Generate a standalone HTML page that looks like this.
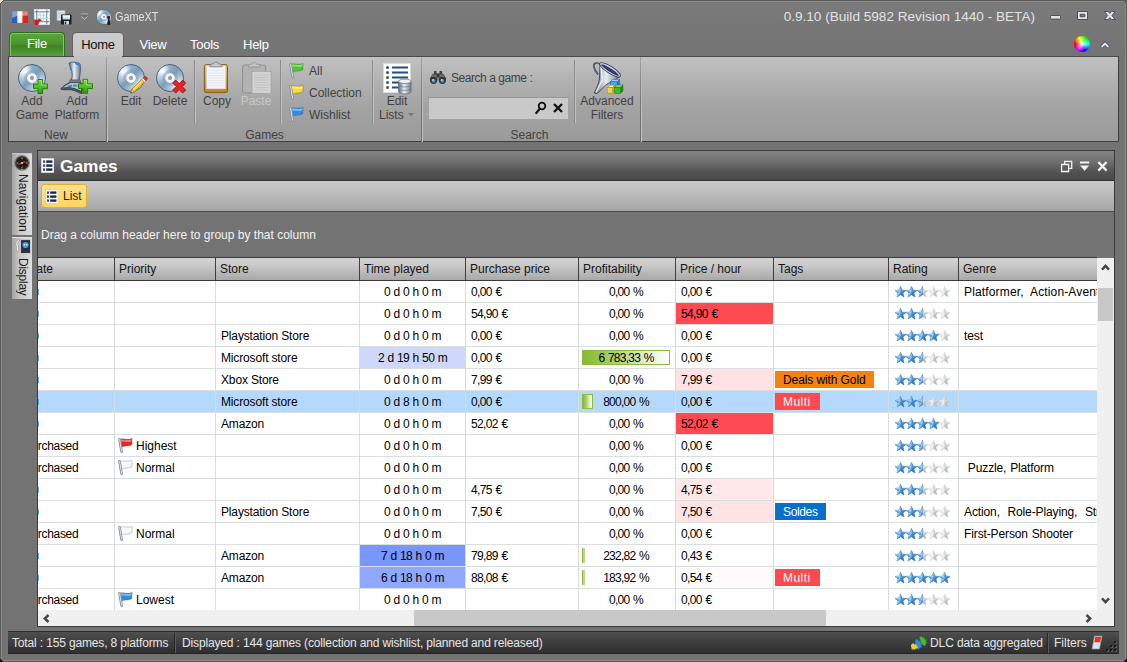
<!DOCTYPE html>
<html lang="en"><head><meta charset="utf-8"><title>GameXT</title>
<style>

*{box-sizing:border-box;margin:0;padding:0}
html,body{width:1127px;height:662px;overflow:hidden;background:#737373}
body{font-family:"Liberation Sans",sans-serif;font-size:12px;color:#000}
.abs{position:absolute}
#win{position:absolute;left:0;top:0;width:1127px;height:662px;background:#737373;overflow:hidden}
.ct{height:21px;line-height:23px;white-space:pre;font-size:12px;color:#000}
.num{letter-spacing:-.55px;word-spacing:.6px}
.num2{letter-spacing:-.65px;word-spacing:1px}
.gen{letter-spacing:-.12px;word-spacing:.6px}
.tag{height:17px;line-height:18px;padding-left:8px;letter-spacing:-.1px}
.hl{left:0;width:1060px;height:1px;background:#dcdfe2}
.vl{top:0;width:1px;height:329px;background:#d9dcdf}
.hd{height:22px;line-height:22px;font-size:12px;color:#141414;white-space:pre}
.hdrbg{background:linear-gradient(#d1d1d1 0%,#cbcbcb 30%,#b7b7b7 70%,#a9a9a9 100%)}
.bar{border:1px solid #8cbd3a;background:linear-gradient(90deg,#86b92f 0%,#a9cf68 35%,#e4f1cf 75%,#ffffff 100%);box-sizing:content-box}
.rt{color:#424242;font-size:12px;white-space:pre;text-align:center;line-height:14px}
.tab{top:33px;height:24px;line-height:24px;font-size:13px;color:#fff;white-space:pre;letter-spacing:-.25px}
.gsep{top:57px;width:2px;height:85px;background:linear-gradient(rgba(255,255,255,0),rgba(255,255,255,0)),linear-gradient(90deg,#6e6e6e 0 1px,#c2c2c2 1px 2px);-webkit-mask-image:linear-gradient(rgba(0,0,0,.35),#000 70%);mask-image:linear-gradient(rgba(0,0,0,.35),#000 70%)}
.isep{top:60px;width:2px;height:63px;background:linear-gradient(90deg,#8c8c8c 0 1px,#c0c0c0 1px 2px)}
.glabel{top:128px;height:15px;line-height:15px;color:#424242;font-size:12px;text-align:center;white-space:pre}
.disc{width:28px;height:28px;border-radius:50%;border:1px solid #48657e;background:radial-gradient(circle at 50% 50%,#9a9a9a 0,#a2a2a2 1.6px,#f4f5f7 2.5px,#f4f5f7 4.4px,#a3b6c8 5px,rgba(128,160,190,.6) 5.6px,rgba(128,160,190,.5) 7.4px,rgba(255,255,255,0) 8.4px),conic-gradient(from 0deg,#8eadc8 0deg,#7b9cb9 45deg,#bdd2e3 95deg,#f2f7fb 125deg,#fbfdfe 138deg,#c3d6e6 165deg,#7b9cb9 225deg,#bdd2e3 275deg,#f6fafd 305deg,#ffffff 318deg,#c9dbea 340deg,#8eadc8 360deg)}
.st{color:#e6e6e6;font-size:12px;line-height:22px;height:22px;white-space:pre;top:632px}

</style></head>
<body>

<svg width="0" height="0" style="position:absolute">
<defs>
<radialGradient id="gDisc" cx="35%" cy="30%" r="80%">
 <stop offset="0" stop-color="#eef4f9"/><stop offset=".4" stop-color="#b9cfe1"/><stop offset=".78" stop-color="#8eadc8"/><stop offset="1" stop-color="#6487a6"/>
</radialGradient>
<linearGradient id="gDiscShine" x1="0" y1="0" x2="1" y2="1">
 <stop offset="0" stop-color="#fff" stop-opacity=".95"/><stop offset=".5" stop-color="#fff" stop-opacity=".1"/><stop offset="1" stop-color="#fff" stop-opacity=".7"/>
</linearGradient>
<linearGradient id="gPlus" x1="0" y1="0" x2="0" y2="1"><stop offset="0" stop-color="#7fe04a"/><stop offset="1" stop-color="#2f9a12"/></linearGradient>
<linearGradient id="gStarB" x1="0" y1="0" x2=".6" y2="1"><stop offset="0" stop-color="#cfe4f7"/><stop offset=".4" stop-color="#5aa7e8"/><stop offset="1" stop-color="#3a8ad6"/></linearGradient>
<linearGradient id="gStarG" x1="0" y1="0" x2="1" y2="1"><stop offset="0" stop-color="#fbfbfb"/><stop offset=".5" stop-color="#e6e6e6"/><stop offset="1" stop-color="#cfcfcf"/></linearGradient>
<linearGradient id="gClip" x1="0" y1="0" x2="0" y2="1"><stop offset="0" stop-color="#e8c07a"/><stop offset="1" stop-color="#b9822c"/></linearGradient>
<linearGradient id="gMetal" x1="0" y1="0" x2="1" y2="0"><stop offset="0" stop-color="#5c6674"/><stop offset=".45" stop-color="#e9eef4"/><stop offset="1" stop-color="#6d7887"/></linearGradient>
<g id="disc">
 <circle cx="15" cy="16" r="13.5" fill="url(#gDisc)" stroke="#48657e" stroke-width="1.100"/><circle cx="15" cy="16" r="7.300" fill="none" stroke="#86a4bf" stroke-width="1.400" opacity=".7"/>
 <path d="M15 16 L3.500 8.500 A13.6 13.6 0 0 1 12.500 2.700Z" fill="#fff" opacity=".7"/>
 <path d="M15 16 L26.500 23.500 A13.6 13.6 0 0 1 17.500 29.300Z" fill="#fff" opacity=".5"/>
 <circle cx="15" cy="16" r="4.700" fill="#f3f4f6" stroke="#a9b9c8" stroke-width=".8"/>
 <circle cx="15" cy="16" r="2" fill="#a2a2a2" stroke="#8a8a8a" stroke-width=".6"/>
</g>
<g id="plus">
 <path d="M5 .5h4.600v4.600h4.900v4.600H9.600v4.800H5V9.700H.5V5.100H5z" fill="url(#gPlus)" stroke="#23800c" stroke-width="1"/><path d="M6 1.500h2.600v4.600h4.900" stroke="#b8f28e" stroke-width=".8" fill="none" opacity=".8"/>
</g>
<g id="star"><path d="M5.5 0.3 L7.0 4.2 L11 4.4 L7.9 7.0 L9.0 11 L5.5 8.7 L2.0 11 L3.1 7.0 L0 4.4 L4.0 4.2Z"/><path d="M5.5 .3L4 4.200 5.500 6zM0 4.400L4 4.200 5.500 6zM2 11L3.100 7 5.500 6z" fill="#fff" fill-opacity=".5" stroke="none"/><path d="M11 4.400L7.900 7 5.500 6zM9 11L7.900 7 5.500 6zM9 11L5.500 8.700 5.500 6zM5.500 .3L7 4.200 5.500 6z" fill="#0a2040" fill-opacity=".15" stroke="none"/></g>
<g id="hstar"><path d="M5.5 0.3 L5.5 8.7 L2.0 11 L3.1 7.0 L0 4.4 L4.0 4.2Z"/><path d="M5.5 .3L4 4.200 5.500 6zM0 4.400L4 4.200 5.500 6zM2 11L3.100 7 5.500 6z" fill="#fff" fill-opacity=".5" stroke="none"/></g>
<g id="flag">
 <path d="M1.5 1.2 L3.6 13.6" stroke="#868d94" stroke-width="2.6" stroke-linecap="round" fill="none"/>
 <path d="M1.6 1.3 L3.6 13.4" stroke="#dde1e5" stroke-width="1" stroke-linecap="round" fill="none"/>
</g>
<g id="listico">
 <rect x=".5" y=".5" width="12.500" height="14" fill="#fff" stroke="#d0d0d0"/>
 <rect x="2" y="2.400" width="2.200" height="2.400" fill="#3d4b63"/><rect x="5.200" y="2.400" width="6.200" height="2.400" fill="#14284e"/>
 <rect x="2" y="6.400" width="2.200" height="2.400" fill="#3d4b63"/><rect x="5.200" y="6.400" width="6.200" height="2.400" fill="#14284e"/>
 <rect x="2" y="10.400" width="2.200" height="2.400" fill="#3d4b63"/><rect x="5.200" y="10.400" width="6.200" height="2.400" fill="#14284e"/>
</g>
</defs></svg>

<div id="win">

<!-- window frame -->
<div class="abs" style="left:0;top:0;width:1127px;height:57px;background:linear-gradient(#7a7a7a,#747474)"></div>
<div class="abs" style="left:0;top:0;width:1127px;height:662px;border:1px solid #5c5c5c;border-radius:4px;box-shadow:inset 0 0 0 1px #8a8a8a"></div>
<div class="abs" style="left:0;top:0;width:4px;height:4px;background:linear-gradient(135deg,#e6dfdb 0 40%,#5c5c5c 40% 60%,transparent 60%)"></div>
<div class="abs" style="left:1123px;top:0;width:4px;height:4px;background:linear-gradient(225deg,#5a605e 0 40%,#5c5c5c 40% 60%,transparent 60%)"></div>
<div class="abs" style="left:0;top:658px;width:4px;height:4px;background:linear-gradient(45deg,#15150f 0 40%,#5c5c5c 40% 60%,transparent 60%)"></div>
<div class="abs" style="left:1123px;top:658px;width:4px;height:4px;background:linear-gradient(315deg,#15150f 0 40%,#5c5c5c 40% 60%,transparent 60%)"></div>
<!-- quick access icons -->
<svg class="abs" style="left:12px;top:11px" width="16" height="12" viewBox="0 0 16 12">
 <rect x="0" y="0" width="5.4" height="12" fill="#2a63c8"/><rect x="5.4" y="0" width="5.2" height="12" fill="#f4f4f4"/><rect x="10.6" y="0" width="5.4" height="12" fill="#e3261c"/>
 <path d="M0 0h16v4.500C10 5.500 5 3 0 7.500z" fill="#fff" opacity=".42"/><rect x="0" y="0" width="16" height="12" fill="none" stroke="rgba(40,40,60,.35)" stroke-width=".6"/>
</svg>
<svg class="abs" style="left:34px;top:9px" width="16" height="16" viewBox="0 0 16 16">
 <rect x=".4" y=".4" width="15.200" height="15.200" fill="#fff" stroke="#ececec" stroke-width=".6"/>
 <path d="M2.800 .8v14.400M12.800 .8v14.400M.8 2.800h14.400M.8 12.700h14.400" stroke="#3b6ea8" stroke-width=".9" fill="none"/>
 <path d="M6.100 2.800v10M9.500 2.800v10M2.800 6.100h10M2.800 9.400h10" stroke="#b4c9e0" stroke-width=".8" fill="none"/>
 <path d="M.2 10.500l2.600 1c.8-1.400 3.400-2 5.600-.4l-2.900 1.700L4.200 16H.2z" fill="#c8202a"/>
 <path d="M.2 10.500l2.600 1c.6-1 2-1.500 3.400-1.300" fill="none" stroke="#8e1218" stroke-width=".5"/>
</svg>
<svg class="abs" style="left:56px;top:10px" width="16" height="15" viewBox="0 0 16 15">
 <path d="M1 .5h8v10H1z" fill="#dfe8f1" stroke="#9fb0c2" stroke-width=".8"/>
 <path d="M2.5 3h5M2.5 5h5M2.5 7h5" stroke="#a9b9ca" stroke-width=".8"/>
 <rect x="5" y="4.5" width="10.5" height="10" rx="1" fill="#1d1d1f"/>
 <rect x="6.6" y="5.4" width="7.4" height="4" fill="#cfe3f7"/><rect x="6.6" y="5.4" width="7.4" height="1.3" fill="#fff"/>
 <rect x="8" y="11" width="5" height="3.5" fill="#d8d8d8"/><rect x="8.8" y="11.6" width="1.4" height="2.4" fill="#222"/>
</svg>
<svg class="abs" style="left:80px;top:13px" width="9" height="8" viewBox="0 0 9 8">
 <path d="M.6 .9h7.600" stroke="#b4b4b4" stroke-width="1"/><path d="M1.300 3.300l3.100 3.300 3.100-3.300" fill="none" stroke="#bdbdbd" stroke-width="1"/><path d="M1.300 2.900h6.200" stroke="#5f5f5f" stroke-width=".7"/>
</svg>
<div class="abs disc" style="left:96px;top:9px;transform:scale(.56);transform-origin:0 0;border-width:1.600px"></div>
<svg class="abs" style="left:104px;top:15px" width="8" height="11" viewBox="0 0 8 11"><path d="M3.600 1.200c1-.8 2.400 0 2.200 1.300L5.600 4.500l.8 5.300H3.200l.6-5.200z" fill="#15171a"/><circle cx="4.600" cy="2.200" r="1.300" fill="#23272c"/></svg>
<div class="abs" style="left:115px;top:8px;height:18px;line-height:18px;font-size:12.500px;color:#e2e2e2;white-space:pre;transform:scaleX(.87);transform-origin:0 0">GameXT</div>
<div class="abs" style="right:92px;top:8px;height:18px;line-height:18px;font-size:13.600px;color:#e2e2e2;white-space:pre">0.9.10 (Build 5982 Revision 1440 - BETA)</div>
<!-- window buttons -->
<svg class="abs" style="left:1049px;top:10px" width="68" height="12" viewBox="0 0 68 12">
 <rect x="1.500" y="5.500" width="10" height="3.600" rx=".8" fill="#e2e2e2" stroke="#41455c" stroke-width=".9"/>
 <path d="M28.500 1.500h10v8h-10z M31.200 4.300v2.400h4.600V4.300z" fill="#e2e2e2" fill-rule="evenodd" stroke="#41455c" stroke-width=".9"/>
 <path d="M55.400 1.500h3.900l1.500 1.900 1.500-1.900h3.900l-3.300 4 3.300 4h-3.900l-1.500-1.900-1.500 1.900h-3.900l3.300-4z" fill="#e6e6e6" stroke="#41455c" stroke-width=".9"/>
</svg>
<!-- colour wheel -->
<div class="abs" style="left:1074.300px;top:36.200px;width:15.500px;height:15.500px;border-radius:50%;background:radial-gradient(circle at 50% 50%,rgba(0,0,0,0) 58%,rgba(0,0,0,.45) 100%),radial-gradient(circle at 50% 50%,#fff 0,rgba(255,255,255,.6) 22%,rgba(255,255,255,0) 60%),conic-gradient(from -25deg,#ff0 0,#0f0 17%,#0ff 33%,#00f 50%,#f0f 67%,#f00 83%,#ff0 100%)"></div>
<svg class="abs" style="left:1099.600px;top:40.600px" width="10" height="8" viewBox="0 0 10 8"><path d="M1.500 6L5 2.500 8.500 6" stroke="#454960" stroke-width="3.400" fill="none"/><path d="M1.700 5.900L5 2.600l3.300 3.300" stroke="#ececec" stroke-width="2" fill="none"/></svg>
<!-- tabs -->
<div class="abs" style="left:9px;top:32px;width:56px;height:25px;border:1px solid #2f6e1c;border-bottom:none;border-radius:4px 4px 0 0;background:linear-gradient(#5aa83c 0%,#4a9430 45%,#3f8527 55%,#57a338 100%);box-shadow:inset 0 0 0 1px #7fc95e"></div>
<div class="abs tab" style="left:9px;width:56px;text-align:center;top:32px">File</div>
<div class="abs" style="left:73px;top:33px;width:50px;height:25px;border-radius:4px 4px 0 0;background:linear-gradient(#cdcdcd,#c9c9c9 60%,#c3c3c3);box-shadow:0 0 0 1px rgba(60,60,60,.35)"></div>
<div class="abs" style="left:71px;top:56px;width:54px;height:1px;background:linear-gradient(90deg,#737373 0,#c3c3c3 2px,#c3c3c3 52px,#737373 54px)"></div>
<div class="abs tab" style="left:73px;width:50px;text-align:center;color:#111">Home</div>
<div class="abs tab" style="left:139.500px">View</div>
<div class="abs tab" style="left:190px">Tools</div>
<div class="abs tab" style="left:243px">Help</div>


<div class="abs" style="left:8px;top:56px;width:1111px;height:86px;border:1px solid #3e3e3e;border-top-color:#4a4a4a;background:linear-gradient(#c1c1c1 0%,#b1b1b1 30%,#a3a3a3 60%,#9a9a9a 100%)"></div>
<div class="abs" style="left:74px;top:56px;width:48px;height:1px;background:#c3c3c3"></div>
<div class="abs gsep" style="left:106px"></div>
<div class="abs gsep" style="left:421px"></div>
<div class="abs gsep" style="left:640px"></div>
<div class="abs isep" style="left:194px"></div>
<div class="abs isep" style="left:280px"></div>
<div class="abs isep" style="left:372px"></div>
<div class="abs isep" style="left:574px"></div>
<div class="abs glabel" style="left:9px;width:94px">New</div>
<div class="abs glabel" style="left:108px;width:313px">Games</div>
<div class="abs glabel" style="left:423px;width:213px">Search</div>
<!-- Add Game -->
<div class="abs disc" style="left:18px;top:64px"></div>
<svg class="abs" style="left:17px;top:62px" width="32" height="33" viewBox="0 0 32 33"><use href="#plus" x="16" y="17"/></svg>
<div class="abs rt" style="left:-8px;top:94px;width:80px;color:#424242">Add<br>Game</div>
<!-- Add Platform -->
<svg class="abs" style="left:60px;top:61px" width="34" height="34" viewBox="0 0 34 34">
 <path d="M10 21h10l2 3v8.600c-3-.6-6-3-10.500-3.800-4.500-.6-8.500.7-10.700-.8C3 25 7 23 10 21z" fill="#56616e" stroke="#2c343d" stroke-width=".9"/>
 <path d="M10.300 22h9.200l1.500 2.500v5.800c-2.500-1-5.500-2.800-9.500-3.400-3.200-.4-6.200.2-8.300-.2 2-2 4.800-3.500 7.100-4.700z" fill="#b4bec9"/>
 <path d="M3.500 27.200c3-.8 6-.6 8.500-.2 3.500.6 6.500 2.200 9 3.300" stroke="#39424d" stroke-width="1.100" fill="none"/>
 <path d="M7.800 24.600l4-.9.300 1.900-4.200.9zM13 23.700h4.300v1.900H13z" fill="#2f86e0"/>
 <path d="M10.300 18.600h9.600l.8 2.700H9.700z" fill="#7f8b99" stroke="#414a56" stroke-width=".7"/>
 <path d="M9 2.200C11 .8 17 .6 20 3c1 4 .3 10-1 16h-8c1.800-3 1.400-8-.2-12C10 5 9.300 3.500 9 2.200z" fill="url(#gMetal)" stroke="#4d5763" stroke-width=".9"/>
 <path d="M14 1.100c2.500-.2 4.600.5 6 1.900l.6 2.600-5-2.300z" fill="#2f86e0"/><path d="M9.700 4.400l1.500 3.800.2 1.800-1.300-2.400z" fill="#2f86e0" stroke="#2f86e0" stroke-width=".8"/>
 <use href="#plus" x="18" y="17.800"/>
</svg>
<div class="abs rt" style="left:37px;top:94px;width:80px;color:#424242">Add<br>Platform</div>
<!-- Edit -->
<div class="abs disc" style="left:117px;top:64px"></div>
<svg class="abs" style="left:116px;top:62px" width="33" height="33" viewBox="0 0 33 33">
 <g transform="translate(14.600 31.100) rotate(-44.500)">
  <path d="M0 0L3.400-1.900H17.400V1.900H3.400z" fill="#f0c52e" stroke="#a37a12" stroke-width=".8"/>
  <path d="M3.400-.6H17.400" stroke="#fbe58a" stroke-width="1"/>
  <path d="M0 0L3.400-1.900V1.900z" fill="#e9d3a8" stroke="#7d6a48" stroke-width=".6"/><path d="M0 0l1.200-.7v1.400z" fill="#333"/>
  <rect x="17.400" y="-1.900" width="2.200" height="3.800" fill="#e9ecef" stroke="#8b9198" stroke-width=".5"/>
  <path d="M19.600-1.900h1.700c1.600 0 1.600 3.800 0 3.800h-1.700z" fill="#e23a2c" stroke="#98241a" stroke-width=".6"/>
 </g>
</svg>
<div class="abs rt" style="left:91px;top:94px;width:80px;color:#424242">Edit</div>
<!-- Delete -->
<div class="abs disc" style="left:156px;top:64px"></div>
<svg class="abs" style="left:155px;top:62px" width="33" height="33" viewBox="0 0 33 33">
 <path transform="translate(.7 1.600)" d="M17 19.500l3-3 3.500 3.500 3.500-3.500 3 3-3.500 3.500 3.500 3.500-3 3-3.500-3.500-3.500 3.500-3-3 3.500-3.500z" fill="#e3232a" stroke="#a01016" stroke-width=".9"/>
</svg>
<div class="abs rt" style="left:130px;top:94px;width:80px;color:#424242">Delete</div>
<!-- Copy -->
<svg class="abs" style="left:203px;top:61px" width="27" height="34" viewBox="0 0 27 34">
 <rect x="1.300" y="3.600" width="23.200" height="28" rx="2" fill="url(#gClip)" stroke="#8a5c16" stroke-width="1"/>
 <rect x="3.600" y="5" width="18.800" height="22.800" fill="#f3f4f9" stroke="#d8d8de" stroke-width=".6"/>
 <path d="M5 9.500h16M5 12h16M5 14.500h16M5 17h16M5 19.500h16M5 22h16M5 24.500h16" stroke="#e1e4ec" stroke-width=".8"/>
 <path d="M7 5.800V4.200c0-1 1.500-1.300 3.300-1.300C10.600 .8 15.200 .8 15.500 2.900c1.800 0 3.300.3 3.300 1.300v1.600z" fill="#c4c9cf" stroke="#6f7780" stroke-width=".8"/>
</svg>
<div class="abs rt" style="left:177px;top:94px;width:80px;color:#424242">Copy</div>
<!-- Paste (disabled) -->
<svg class="abs" style="left:241px;top:61px" width="31" height="34" viewBox="0 0 31 34">
 <rect x="1.600" y="4" width="23" height="28" rx="2" fill="#b2b2b2" stroke="#8e8e8e" stroke-width="1"/>
 <path d="M7.500 6V4.500c0-1 1.500-1.300 3.300-1.300C11.100 1.100 15.200 1.100 15.500 3.200c1.800 0 3.300.3 3.300 1.300V6z" fill="#c6c6c6" stroke="#8e8e8e" stroke-width=".8"/>
 <rect x="11" y="10.300" width="19" height="22" fill="#d3d3d3" stroke="#a4a4a4" stroke-width=".8"/>
 <path d="M13.500 14h14M13.500 16.500h14M13.500 19h14M13.500 21.500h14M13.500 24h14M13.500 26.500h14M13.500 29h14" stroke="#bcbcbc" stroke-width=".8"/>
</svg>
<div class="abs rt" style="left:216px;top:94px;width:80px;color:#c9c9c9">Paste</div><svg class="abs" style="left:289px;top:63px;overflow:visible" width="16" height="16" viewBox="0 0 16 16"><path d="M2 1.3 C5 -0.2 9 2.4 14.2 0.5 L13.8 6.8 C9.500 9.2 6.500 7 3.300 9.500Z" fill="#4fc233" stroke="rgba(0,0,0,.28)" stroke-width=".7"/><path d="M2.4 1.800 C5 0.6 9 3 13.800 1.3 L13.700 3.2 C9.500 5 6 2.600 2.700 4Z" fill="#ffffff" opacity=".4"/><use href="#flag"/></svg><svg class="abs" style="left:289px;top:85px;overflow:visible" width="16" height="16" viewBox="0 0 16 16"><path d="M2 1.3 C5 -0.2 9 2.4 14.2 0.5 L13.8 6.8 C9.500 9.2 6.500 7 3.300 9.500Z" fill="#f2dc3a" stroke="rgba(0,0,0,.28)" stroke-width=".7"/><path d="M2.4 1.800 C5 0.6 9 3 13.800 1.3 L13.700 3.2 C9.500 5 6 2.600 2.700 4Z" fill="#ffffff" opacity=".4"/><use href="#flag"/></svg><svg class="abs" style="left:289px;top:107px;overflow:visible" width="16" height="16" viewBox="0 0 16 16"><path d="M2 1.3 C5 -0.2 9 2.4 14.2 0.5 L13.8 6.8 C9.500 9.2 6.500 7 3.300 9.500Z" fill="#2f8fe6" stroke="rgba(0,0,0,.28)" stroke-width=".7"/><path d="M2.4 1.800 C5 0.6 9 3 13.800 1.3 L13.700 3.2 C9.500 5 6 2.600 2.700 4Z" fill="#ffffff" opacity=".4"/><use href="#flag"/></svg>
<div class="abs rt" style="left:309px;top:64px;text-align:left;line-height:15px">All</div>
<div class="abs rt" style="left:309px;top:86px;text-align:left;line-height:15px">Collection</div>
<div class="abs rt" style="left:309px;top:108px;text-align:left;line-height:15px">Wishlist</div>
<!-- Edit Lists -->
<svg class="abs" style="left:383px;top:62px" width="30" height="33" viewBox="0 0 30 33">
 <rect x=".5" y="1.500" width="27" height="29" fill="#fff" stroke="#dcdcdc"/>
 <g fill="#4b5563"><circle cx="4.500" cy="5.500" r="1.500"/><circle cx="4.500" cy="10.500" r="1.500"/><circle cx="4.500" cy="15.500" r="1.500"/><circle cx="4.500" cy="20.500" r="1.500"/><circle cx="4.500" cy="25.500" r="1.500"/></g>
 <path d="M9 5.500h16M9 10.500h16M9 15.500h16M9 20.500h8M9 25.500h8" stroke="#1d4f86" stroke-width="2"/>
 <g transform="translate(-.5 1.300)"><path d="M16 18v10.500c0 2.800 12.600 2.800 12.600 0V18z" fill="url(#gMetal)" stroke="#6c7784" stroke-width=".8"/>
 <ellipse cx="22.300" cy="18" rx="6.300" ry="2.200" fill="#eef2f6" stroke="#6c7784" stroke-width=".8"/>
 <path d="M16 21.500c0 2.800 12.600 2.800 12.600 0M16 25c0 2.800 12.600 2.800 12.600 0" stroke="#6c7784" stroke-width=".7" fill="none"/></g>
</svg>
<div class="abs rt" style="left:367px;top:94px;width:60px">Edit</div>
<div class="abs rt" style="left:379px;top:108px;text-align:left">Lists</div>
<svg class="abs" style="left:408px;top:113px" width="6" height="4" viewBox="0 0 6 4"><path d="M0 0h6L3 3.600z" fill="#7a7a7a"/></svg>
<!-- Search -->
<svg class="abs" style="left:429px;top:70px" width="18" height="15" viewBox="0 0 18 15">
 <path d="M5 1h2.500v5H5zM10.500 1H13v5h-2.500z" fill="#4a4038"/>
 <rect x="7" y="3.500" width="4" height="4" fill="#3a332c"/>
 <path d="M1 9l3-5h4v6zM17 9l-3-5h-4v6z" fill="#7a726a" stroke="#3a342e" stroke-width=".7"/>
 <circle cx="4.600" cy="10.300" r="3.600" fill="#3b3530"/><circle cx="13.400" cy="10.300" r="3.600" fill="#3b3530"/>
 <circle cx="4.600" cy="10.800" r="1.900" fill="#3d8fd0"/><circle cx="13.400" cy="10.800" r="1.900" fill="#3d8fd0"/>
 <circle cx="4" cy="10" r=".9" fill="#bfe2fa"/><circle cx="12.800" cy="10" r=".9" fill="#bfe2fa"/>
</svg>
<div class="abs rt" style="left:451px;top:71px;text-align:left;line-height:15px;letter-spacing:-.45px">Search a game :</div>
<div class="abs" style="left:428px;top:97px;width:141px;height:23px;background:#c9c9c9;border:1px solid #a2a2a2;border-top-color:#989898"></div>
<svg class="abs" style="left:535px;top:101px" width="12" height="14" viewBox="0 0 12 14"><circle cx="7" cy="5" r="3.300" fill="none" stroke="#111" stroke-width="1.800"/><path d="M4.800 7.600L1.300 12" stroke="#111" stroke-width="2.200" stroke-linecap="round"/></svg>
<svg class="abs" style="left:553px;top:103px" width="10" height="10" viewBox="0 0 10 10"><path d="M1 1l8 8M9 1L1 9" stroke="#111" stroke-width="2.300"/></svg>
<!-- Advanced Filters -->
<svg class="abs" style="left:592px;top:61px" width="33" height="34" viewBox="0 0 33 34">
 <path d="M8.500 3.500C4.500 .8 1 2 2 6c.6 3 2 5.200 3.600 6.800" fill="none" stroke="#2f3b4e" stroke-width="1.700" stroke-linecap="round"/>
 <path d="M8.500 3.500C4.500 .8 1 2 2 6c.6 3 2 5.200 3.600 6.800" fill="none" stroke="#8d9bb0" stroke-width=".6" stroke-linecap="round"/>
 <path d="M8 3L28 15.500c-5 3.500-11 6.500-14.500 8.500L5.200 32.600 2.300 32C4.500 27 7 22 7.500 18z" fill="url(#gMetal)" stroke="#39424e" stroke-width=".9"/>
 <path d="M9 6l1.500 12.500L4 31.500" stroke="#f6f8fb" stroke-width="1.600" fill="none" opacity=".85"/>
 <g transform="translate(18.100 8.800) rotate(32.500)">
  <ellipse cx="0" cy="0" rx="12.200" ry="3.400" fill="#dfe5ec" stroke="#39424e" stroke-width=".9"/>
  <ellipse cx="0" cy=".3" rx="10.600" ry="1.700" fill="#34346a"/>
  <path d="M-10.600 .3a10.600 2.100 0 0 1 21.200 0" fill="none" stroke="#8f98c8" stroke-width=".7"/>
 </g>
 <path d="M18.3 20.799999999999997L20.7 18.4H27.6L25.200000000000003 20.799999999999997z" fill="#9fd0f7" stroke="#1f62a8" stroke-width=".5"/><path d="M25.200000000000003 20.799999999999997L27.6 18.4V23.8L25.200000000000003 26.2z" fill="#2b78c4" stroke="#1f62a8" stroke-width=".5"/><rect x="18.3" y="20.799999999999997" width="6.9" height="5.4" fill="#4da3ea" stroke="#1f62a8" stroke-width=".5"/><path d="M15.2 26.599999999999998L17.599999999999998 24.2H23.0L20.6 26.599999999999998z" fill="#faef9a" stroke="#a08a12" stroke-width=".5"/><path d="M20.6 26.599999999999998L23.0 24.2V29.700000000000003L20.6 32.1z" fill="#c9ae1c" stroke="#a08a12" stroke-width=".5"/><rect x="15.2" y="26.599999999999998" width="5.4" height="5.5" fill="#f1d83f" stroke="#a08a12" stroke-width=".5"/><path d="M22.4 26.299999999999997L24.799999999999997 23.9H31.0L28.6 26.299999999999997z" fill="#8ede6c" stroke="#23740f" stroke-width=".5"/><path d="M28.6 26.299999999999997L31.0 23.9V30.0L28.6 32.4z" fill="#2c8c16" stroke="#23740f" stroke-width=".5"/><rect x="22.4" y="26.299999999999997" width="6.199999999999999" height="6.1" fill="#46b72a" stroke="#23740f" stroke-width=".5"/>
</svg>
<div class="abs rt" style="left:567px;top:94px;width:80px;color:#424242">Advanced<br>Filters</div>

<div class="abs" style="left:12px;top:153px;width:20px;height:82px;background:linear-gradient(90deg,#a2a2a2 0%,#c6c6c6 35%,#dedede 100%);border-top:1px solid #c4c4c4"></div>
<div class="abs" style="left:12px;top:237px;width:20px;height:62px;background:linear-gradient(90deg,#a2a2a2 0%,#c6c6c6 35%,#dedede 100%);border-top:1px solid #e4e4e4"></div>
<svg class="abs" style="left:14px;top:155px" width="16" height="16" viewBox="0 0 16 16">
 <circle cx="8" cy="8" r="7.300" fill="#2a2724" stroke="#8f8371" stroke-width="1.200"/><circle cx="8" cy="8" r="5.700" fill="#1b1b1b" stroke="#4a443c" stroke-width=".6"/>
 <path d="M8 2.800v1.400M8 11.800v1.400M2.800 8h1.400M11.800 8h1.400" stroke="#d8d2c8" stroke-width=".8"/>
 <path d="M3.300 9.800L7.600 7.100 8.400 8.900z" fill="#e6342a"/><path d="M12.700 6.200L8.400 8.900 7.600 7.100z" fill="#e6342a"/><path d="M7.200 7.700l1.600.6" stroke="#fff" stroke-width="1.100"/>
 <rect x="7" y="14.200" width="2" height="1.300" fill="#b5a78f"/>
</svg>
<div class="abs" style="left:12px;top:174px;width:20px;height:60px"><div style="position:absolute;left:21px;top:0;transform-origin:0 0;transform:rotate(90deg);white-space:pre;font-size:12px;line-height:20px;height:20px;color:#1c1c1c;letter-spacing:.1px">Navigation</div></div>
<svg class="abs" style="left:14.500px;top:238.500px" width="16" height="15" viewBox="0 0 16 15">
 <path d="M3.600 1.600C1.400 2.200 1.600 5 2.300 7c.6 1.800-.8 3.400.8 4.800" fill="none" stroke="#8e8e8e" stroke-width="2.400" stroke-linecap="round"/>
 <path d="M3.600 1.600C1.400 2.200 1.600 5 2.300 7c.6 1.800-.8 3.400.8 4.800" fill="none" stroke="#f0f0f0" stroke-width="1.300" stroke-linecap="round"/>
 <rect x="5.500" y=".5" width="10" height="14" fill="#3c434c" stroke="#c9cdd2" stroke-width=".9"/>
 <rect x="6.600" y="1.600" width="7.800" height="11.800" fill="#2a3038"/>
 <circle cx="10.500" cy="6" r="3.100" fill="#3f9af0"/><circle cx="9.400" cy="5.800" r=".8" fill="#fff"/><circle cx="11.700" cy="5.800" r=".8" fill="#fff"/>
</svg>
<div class="abs" style="left:12px;top:258px;width:20px;height:40px"><div style="position:absolute;left:21px;top:0;transform-origin:0 0;transform:rotate(90deg);white-space:pre;font-size:12px;line-height:20px;height:20px;color:#1c1c1c;letter-spacing:-.25px">Display</div></div>


<div class="abs" style="left:37px;top:150px;width:1078px;height:477px;background:#737373;border:1px solid #3b3b3b"></div>
<div class="abs" style="left:38px;top:151px;width:1076px;height:29px;background:linear-gradient(#868686 0%,#6e6e6e 38%,#535353 72%,#474747 100%)"></div>
<div class="abs" style="left:38px;top:180px;width:1076px;height:1px;background:#333"></div>
<svg class="abs" style="left:41px;top:158px" width="13" height="15" viewBox="0 0 13 15"><use href="#listico"/></svg>
<div class="abs" style="left:60px;top:154.500px;height:22px;line-height:22px;font-size:17.3px;font-weight:bold;color:#fff;white-space:pre">Games</div>
<svg class="abs" style="left:1059px;top:159.500px" width="50" height="13" viewBox="0 0 50 13">
 <path d="M5.700 1.300h7v7h-7z" fill="none" stroke="#f2f2f2" stroke-width="1.300"/><path d="M2.600 4.500h7v7h-7z" fill="#5a5a5a" stroke="#f2f2f2" stroke-width="1.300"/>
 <path d="M21 2.500h9.200" stroke="#f2f2f2" stroke-width="2"/><path d="M21 5.500h9.200l-4.600 5.200z" fill="#f2f2f2"/>
 <path d="M39.300 2l8.300 8.600M47.600 2l-8.300 8.600" stroke="#f2f2f2" stroke-width="2.300"/>
</svg>
<!-- toolbar -->
<div class="abs" style="left:38px;top:181px;width:1076px;height:30px;background:linear-gradient(#c8c8c8 0%,#bdbdbd 40%,#a4a4a4 100%)"></div>
<div class="abs" style="left:38px;top:211px;width:1076px;height:1px;background:#4a4a4a"></div>
<div class="abs" style="left:41px;top:184px;width:46px;height:24px;border:1px solid #e2b12c;border-radius:3px;background:linear-gradient(#ffe08a,#ffd561)"></div>
<svg class="abs" style="left:45px;top:189px" width="13" height="15" viewBox="0 0 13 15"><use href="#listico"/></svg>
<div class="abs" style="left:63px;top:188px;height:16px;line-height:16px;font-size:12px;color:#2a1a00;white-space:pre">List</div>
<!-- group panel -->
<div class="abs" style="left:41px;top:227px;height:16px;line-height:16px;font-size:12px;color:#f2f2f2;white-space:pre">Drag a column header here to group by that column</div>

<div class="abs" style="left:38px;top:257px;width:1059px;height:24px;background:#3a3a3a;overflow:hidden">
<div class="abs hdrbg" style="left:0;top:1px;width:1060px;height:22px"></div>
<div class="abs hd" style="left:-13px;top:1px">State</div>
<div class="abs" style="left:76px;top:1px;width:1px;height:22px;background:#3f3f3f"></div>
<div class="abs hd" style="left:81px;top:1px">Priority</div>
<div class="abs" style="left:177px;top:1px;width:1px;height:22px;background:#3f3f3f"></div>
<div class="abs hd" style="left:182px;top:1px">Store</div>
<div class="abs" style="left:321px;top:1px;width:1px;height:22px;background:#3f3f3f"></div>
<div class="abs hd" style="left:326px;top:1px">Time played</div>
<div class="abs" style="left:427px;top:1px;width:1px;height:22px;background:#3f3f3f"></div>
<div class="abs hd" style="left:432px;top:1px">Purchase price</div>
<div class="abs" style="left:540px;top:1px;width:1px;height:22px;background:#3f3f3f"></div>
<div class="abs hd" style="left:545px;top:1px">Profitability</div>
<div class="abs" style="left:637px;top:1px;width:1px;height:22px;background:#3f3f3f"></div>
<div class="abs hd" style="left:642px;top:1px">Price / hour</div>
<div class="abs" style="left:735px;top:1px;width:1px;height:22px;background:#3f3f3f"></div>
<div class="abs hd" style="left:740px;top:1px">Tags</div>
<div class="abs" style="left:850px;top:1px;width:1px;height:22px;background:#3f3f3f"></div>
<div class="abs hd" style="left:855px;top:1px">Rating</div>
<div class="abs" style="left:920px;top:1px;width:1px;height:22px;background:#3f3f3f"></div>
<div class="abs hd" style="left:925px;top:1px">Genre</div>
</div>
<div class="abs" style="left:38px;top:281px;width:1059px;height:329px;background:#fff;overflow:hidden">
<div class="abs hl" style="top:21px"></div>
<div class="abs" style="left:0;top:8px;width:1px;height:6px;background:#2b8de0;opacity:.7"></div>
<div class="abs ct num" style="left:322px;top:0px;width:105px;text-align:center">0 d 0 h 0 m</div>
<div class="abs ct num2" style="left:433px;top:0px">0,00 €</div>
<div class="abs ct num2" style="left:540px;top:0px;width:96px;text-align:center;letter-spacing:-.75px;word-spacing:1px">0,00 %</div>
<div class="abs ct num2" style="left:643px;top:0px">0,00 €</div>
<svg class="abs" style="left:857px;top:5px" width="56" height="12" viewBox="0 0 56 12"><use href="#star" x="0" y="0" fill="url(#gStarG)" stroke="#cfcfcf" stroke-width=".5"/><use href="#star" x="11" y="0" fill="url(#gStarG)" stroke="#cfcfcf" stroke-width=".5"/><use href="#star" x="22" y="0" fill="url(#gStarG)" stroke="#cfcfcf" stroke-width=".5"/><use href="#star" x="33" y="0" fill="url(#gStarG)" stroke="#cfcfcf" stroke-width=".5"/><use href="#star" x="44" y="0" fill="url(#gStarG)" stroke="#cfcfcf" stroke-width=".5"/><use href="#star" x="0" y="0" fill="url(#gStarB)" stroke="#3f86c8" stroke-width=".6"/><use href="#star" x="11" y="0" fill="url(#gStarB)" stroke="#3f86c8" stroke-width=".6"/><use href="#hstar" x="22" y="0" fill="url(#gStarB)" stroke="#3f86c8" stroke-width=".6"/></svg>
<div class="abs ct gen" style="left:926px;top:0px;letter-spacing:.15px;word-spacing:0">Platformer,  Action-Aventure</div>
<div class="abs hl" style="top:43px"></div>
<div class="abs" style="left:0;top:30px;width:1px;height:6px;background:#2b8de0;opacity:.7"></div>
<div class="abs ct num" style="left:322px;top:22px;width:105px;text-align:center">0 d 0 h 0 m</div>
<div class="abs ct num2" style="left:433px;top:22px">54,90 €</div>
<div class="abs ct num2" style="left:540px;top:22px;width:96px;text-align:center;letter-spacing:-.75px;word-spacing:1px">0,00 %</div>
<div class="abs" style="left:638px;top:22px;width:97px;height:21px;background:#fe4b53"></div>
<div class="abs ct num2" style="left:643px;top:22px">54,90 €</div>
<svg class="abs" style="left:857px;top:27px" width="56" height="12" viewBox="0 0 56 12"><use href="#star" x="0" y="0" fill="url(#gStarG)" stroke="#cfcfcf" stroke-width=".5"/><use href="#star" x="11" y="0" fill="url(#gStarG)" stroke="#cfcfcf" stroke-width=".5"/><use href="#star" x="22" y="0" fill="url(#gStarG)" stroke="#cfcfcf" stroke-width=".5"/><use href="#star" x="33" y="0" fill="url(#gStarG)" stroke="#cfcfcf" stroke-width=".5"/><use href="#star" x="44" y="0" fill="url(#gStarG)" stroke="#cfcfcf" stroke-width=".5"/><use href="#star" x="0" y="0" fill="url(#gStarB)" stroke="#3f86c8" stroke-width=".6"/><use href="#star" x="11" y="0" fill="url(#gStarB)" stroke="#3f86c8" stroke-width=".6"/><use href="#hstar" x="22" y="0" fill="url(#gStarB)" stroke="#3f86c8" stroke-width=".6"/></svg>
<div class="abs hl" style="top:65px"></div>
<div class="abs" style="left:0;top:52px;width:1px;height:6px;background:#2b8de0;opacity:.7"></div>
<div class="abs ct" style="left:183px;top:44px;letter-spacing:-.15px">Playstation Store</div>
<div class="abs ct num" style="left:322px;top:44px;width:105px;text-align:center">0 d 0 h 0 m</div>
<div class="abs ct num2" style="left:433px;top:44px">0,00 €</div>
<div class="abs ct num2" style="left:540px;top:44px;width:96px;text-align:center;letter-spacing:-.75px;word-spacing:1px">0,00 %</div>
<div class="abs ct num2" style="left:643px;top:44px">0,00 €</div>
<svg class="abs" style="left:857px;top:49px" width="56" height="12" viewBox="0 0 56 12"><use href="#star" x="0" y="0" fill="url(#gStarG)" stroke="#cfcfcf" stroke-width=".5"/><use href="#star" x="11" y="0" fill="url(#gStarG)" stroke="#cfcfcf" stroke-width=".5"/><use href="#star" x="22" y="0" fill="url(#gStarG)" stroke="#cfcfcf" stroke-width=".5"/><use href="#star" x="33" y="0" fill="url(#gStarG)" stroke="#cfcfcf" stroke-width=".5"/><use href="#star" x="44" y="0" fill="url(#gStarG)" stroke="#cfcfcf" stroke-width=".5"/><use href="#star" x="0" y="0" fill="url(#gStarB)" stroke="#3f86c8" stroke-width=".6"/><use href="#star" x="11" y="0" fill="url(#gStarB)" stroke="#3f86c8" stroke-width=".6"/><use href="#star" x="22" y="0" fill="url(#gStarB)" stroke="#3f86c8" stroke-width=".6"/><use href="#star" x="33" y="0" fill="url(#gStarB)" stroke="#3f86c8" stroke-width=".6"/></svg>
<div class="abs ct gen" style="left:926px;top:44px">test</div>
<div class="abs hl" style="top:87px"></div>
<div class="abs" style="left:0;top:74px;width:1px;height:6px;background:#2b8de0;opacity:.7"></div>
<div class="abs ct" style="left:183px;top:66px;letter-spacing:-.15px">Microsoft store</div>
<div class="abs" style="left:322px;top:66px;width:105px;height:21px;background:#ced8fd"></div>
<div class="abs ct num" style="left:322px;top:66px;width:105px;text-align:center">2 d 19 h 50 m</div>
<div class="abs ct num2" style="left:433px;top:66px">0,00 €</div>
<div class="abs bar" style="left:544px;top:69px;width:86px;height:13px"></div>
<div class="abs ct num2" style="left:540px;top:66px;width:96px;text-align:center;letter-spacing:-.75px;word-spacing:1px">6 783,33 %</div>
<div class="abs ct num2" style="left:643px;top:66px">0,00 €</div>
<svg class="abs" style="left:857px;top:71px" width="56" height="12" viewBox="0 0 56 12"><use href="#star" x="0" y="0" fill="url(#gStarG)" stroke="#cfcfcf" stroke-width=".5"/><use href="#star" x="11" y="0" fill="url(#gStarG)" stroke="#cfcfcf" stroke-width=".5"/><use href="#star" x="22" y="0" fill="url(#gStarG)" stroke="#cfcfcf" stroke-width=".5"/><use href="#star" x="33" y="0" fill="url(#gStarG)" stroke="#cfcfcf" stroke-width=".5"/><use href="#star" x="44" y="0" fill="url(#gStarG)" stroke="#cfcfcf" stroke-width=".5"/><use href="#star" x="0" y="0" fill="url(#gStarB)" stroke="#3f86c8" stroke-width=".6"/><use href="#star" x="11" y="0" fill="url(#gStarB)" stroke="#3f86c8" stroke-width=".6"/><use href="#hstar" x="22" y="0" fill="url(#gStarB)" stroke="#3f86c8" stroke-width=".6"/></svg>
<div class="abs hl" style="top:109px"></div>
<div class="abs" style="left:0;top:96px;width:1px;height:6px;background:#2b8de0;opacity:.7"></div>
<div class="abs ct" style="left:183px;top:88px;letter-spacing:-.15px">Xbox Store</div>
<div class="abs ct num" style="left:322px;top:88px;width:105px;text-align:center">0 d 0 h 0 m</div>
<div class="abs ct num2" style="left:433px;top:88px">7,99 €</div>
<div class="abs ct num2" style="left:540px;top:88px;width:96px;text-align:center;letter-spacing:-.75px;word-spacing:1px">0,00 %</div>
<div class="abs" style="left:638px;top:88px;width:97px;height:21px;background:#ffe2e3"></div>
<div class="abs ct num2" style="left:643px;top:88px">7,99 €</div>
<div class="abs ct tag" style="left:737px;top:90px;width:99px;background:#f5820e;color:#000;letter-spacing:-.1px">Deals with Gold</div>
<svg class="abs" style="left:857px;top:93px" width="56" height="12" viewBox="0 0 56 12"><use href="#star" x="0" y="0" fill="url(#gStarG)" stroke="#cfcfcf" stroke-width=".5"/><use href="#star" x="11" y="0" fill="url(#gStarG)" stroke="#cfcfcf" stroke-width=".5"/><use href="#star" x="22" y="0" fill="url(#gStarG)" stroke="#cfcfcf" stroke-width=".5"/><use href="#star" x="33" y="0" fill="url(#gStarG)" stroke="#cfcfcf" stroke-width=".5"/><use href="#star" x="44" y="0" fill="url(#gStarG)" stroke="#cfcfcf" stroke-width=".5"/><use href="#star" x="0" y="0" fill="url(#gStarB)" stroke="#3f86c8" stroke-width=".6"/><use href="#star" x="11" y="0" fill="url(#gStarB)" stroke="#3f86c8" stroke-width=".6"/><use href="#hstar" x="22" y="0" fill="url(#gStarB)" stroke="#3f86c8" stroke-width=".6"/></svg>
<div class="abs" style="left:0;top:110px;width:1060px;height:21px;background:#b5d9fd"></div>
<div class="abs hl" style="top:131px"></div>
<div class="abs" style="left:0;top:118px;width:1px;height:6px;background:#2b8de0;opacity:.7"></div>
<div class="abs ct" style="left:183px;top:110px;letter-spacing:-.15px">Microsoft store</div>
<div class="abs ct num" style="left:322px;top:110px;width:105px;text-align:center">0 d 8 h 0 m</div>
<div class="abs ct num2" style="left:433px;top:110px">0,00 €</div>
<div class="abs bar" style="left:544px;top:113px;width:9px;height:13px"></div>
<div class="abs ct num2" style="left:540px;top:110px;width:96px;text-align:center;letter-spacing:-.75px;word-spacing:1px">800,00 %</div>
<div class="abs ct num2" style="left:643px;top:110px">0,00 €</div>
<div class="abs ct tag" style="left:737px;top:112px;width:45px;background:#fe4a4e;color:#fff;letter-spacing:.45px">Multi</div>
<svg class="abs" style="left:857px;top:115px" width="56" height="12" viewBox="0 0 56 12"><use href="#star" x="0" y="0" fill="url(#gStarG)" stroke="#cfcfcf" stroke-width=".5"/><use href="#star" x="11" y="0" fill="url(#gStarG)" stroke="#cfcfcf" stroke-width=".5"/><use href="#star" x="22" y="0" fill="url(#gStarG)" stroke="#cfcfcf" stroke-width=".5"/><use href="#star" x="33" y="0" fill="url(#gStarG)" stroke="#cfcfcf" stroke-width=".5"/><use href="#star" x="44" y="0" fill="url(#gStarG)" stroke="#cfcfcf" stroke-width=".5"/><use href="#star" x="0" y="0" fill="url(#gStarB)" stroke="#3f86c8" stroke-width=".6"/><use href="#star" x="11" y="0" fill="url(#gStarB)" stroke="#3f86c8" stroke-width=".6"/><use href="#hstar" x="22" y="0" fill="url(#gStarB)" stroke="#3f86c8" stroke-width=".6"/></svg>
<div class="abs hl" style="top:153px"></div>
<div class="abs" style="left:0;top:140px;width:1px;height:6px;background:#2b8de0;opacity:.7"></div>
<div class="abs ct" style="left:183px;top:132px;letter-spacing:-.15px">Amazon</div>
<div class="abs ct num" style="left:322px;top:132px;width:105px;text-align:center">0 d 0 h 0 m</div>
<div class="abs ct num2" style="left:433px;top:132px">52,02 €</div>
<div class="abs ct num2" style="left:540px;top:132px;width:96px;text-align:center;letter-spacing:-.75px;word-spacing:1px">0,00 %</div>
<div class="abs" style="left:638px;top:132px;width:97px;height:21px;background:#fe4b53"></div>
<div class="abs ct num2" style="left:643px;top:132px">52,02 €</div>
<svg class="abs" style="left:857px;top:137px" width="56" height="12" viewBox="0 0 56 12"><use href="#star" x="0" y="0" fill="url(#gStarG)" stroke="#cfcfcf" stroke-width=".5"/><use href="#star" x="11" y="0" fill="url(#gStarG)" stroke="#cfcfcf" stroke-width=".5"/><use href="#star" x="22" y="0" fill="url(#gStarG)" stroke="#cfcfcf" stroke-width=".5"/><use href="#star" x="33" y="0" fill="url(#gStarG)" stroke="#cfcfcf" stroke-width=".5"/><use href="#star" x="44" y="0" fill="url(#gStarG)" stroke="#cfcfcf" stroke-width=".5"/><use href="#star" x="0" y="0" fill="url(#gStarB)" stroke="#3f86c8" stroke-width=".6"/><use href="#star" x="11" y="0" fill="url(#gStarB)" stroke="#3f86c8" stroke-width=".6"/><use href="#star" x="22" y="0" fill="url(#gStarB)" stroke="#3f86c8" stroke-width=".6"/><use href="#star" x="33" y="0" fill="url(#gStarB)" stroke="#3f86c8" stroke-width=".6"/></svg>
<div class="abs hl" style="top:175px"></div>
<div class="abs ct" style="left:-14.3px;top:154px;letter-spacing:-.3px">Purchased</div>
<svg class="abs" style="left:80px;top:157px;overflow:visible" width="16" height="16" viewBox="0 0 16 16"><path d="M2 1.3 C5 -0.2 9 2.4 14.2 0.5 L13.8 6.8 C9.500 9.2 6.500 7 3.300 9.500Z" fill="#e8262a" stroke="rgba(0,0,0,.28)" stroke-width=".7"/><path d="M2.4 1.800 C5 0.6 9 3 13.800 1.3 L13.700 3.2 C9.500 5 6 2.600 2.700 4Z" fill="#ffffff" opacity=".4"/><use href="#flag"/></svg>
<div class="abs ct" style="left:98px;top:154px">Highest</div>
<div class="abs ct num" style="left:322px;top:154px;width:105px;text-align:center">0 d 0 h 0 m</div>
<div class="abs ct num2" style="left:540px;top:154px;width:96px;text-align:center;letter-spacing:-.75px;word-spacing:1px">0,00 %</div>
<div class="abs ct num2" style="left:643px;top:154px">0,00 €</div>
<svg class="abs" style="left:857px;top:159px" width="56" height="12" viewBox="0 0 56 12"><use href="#star" x="0" y="0" fill="url(#gStarG)" stroke="#cfcfcf" stroke-width=".5"/><use href="#star" x="11" y="0" fill="url(#gStarG)" stroke="#cfcfcf" stroke-width=".5"/><use href="#star" x="22" y="0" fill="url(#gStarG)" stroke="#cfcfcf" stroke-width=".5"/><use href="#star" x="33" y="0" fill="url(#gStarG)" stroke="#cfcfcf" stroke-width=".5"/><use href="#star" x="44" y="0" fill="url(#gStarG)" stroke="#cfcfcf" stroke-width=".5"/><use href="#star" x="0" y="0" fill="url(#gStarB)" stroke="#3f86c8" stroke-width=".6"/><use href="#star" x="11" y="0" fill="url(#gStarB)" stroke="#3f86c8" stroke-width=".6"/><use href="#hstar" x="22" y="0" fill="url(#gStarB)" stroke="#3f86c8" stroke-width=".6"/></svg>
<div class="abs hl" style="top:197px"></div>
<div class="abs ct" style="left:-14.3px;top:176px;letter-spacing:-.3px">Purchased</div>
<svg class="abs" style="left:80px;top:179px;overflow:visible" width="16" height="16" viewBox="0 0 16 16"><path d="M2 1.3 C5 -0.2 9 2.4 14.2 0.5 L13.8 6.8 C9.500 9.2 6.500 7 3.300 9.500Z" fill="#f4f6f8" stroke="rgba(0,0,0,.28)" stroke-width=".7"/><path d="M2.4 1.800 C5 0.6 9 3 13.800 1.3 L13.700 3.2 C9.500 5 6 2.600 2.700 4Z" fill="#ffffff" opacity=".4"/><use href="#flag"/></svg>
<div class="abs ct" style="left:98px;top:176px">Normal</div>
<div class="abs ct num" style="left:322px;top:176px;width:105px;text-align:center">0 d 0 h 0 m</div>
<div class="abs ct num2" style="left:540px;top:176px;width:96px;text-align:center;letter-spacing:-.75px;word-spacing:1px">0,00 %</div>
<div class="abs ct num2" style="left:643px;top:176px">0,00 €</div>
<svg class="abs" style="left:857px;top:181px" width="56" height="12" viewBox="0 0 56 12"><use href="#star" x="0" y="0" fill="url(#gStarG)" stroke="#cfcfcf" stroke-width=".5"/><use href="#star" x="11" y="0" fill="url(#gStarG)" stroke="#cfcfcf" stroke-width=".5"/><use href="#star" x="22" y="0" fill="url(#gStarG)" stroke="#cfcfcf" stroke-width=".5"/><use href="#star" x="33" y="0" fill="url(#gStarG)" stroke="#cfcfcf" stroke-width=".5"/><use href="#star" x="44" y="0" fill="url(#gStarG)" stroke="#cfcfcf" stroke-width=".5"/><use href="#star" x="0" y="0" fill="url(#gStarB)" stroke="#3f86c8" stroke-width=".6"/><use href="#star" x="11" y="0" fill="url(#gStarB)" stroke="#3f86c8" stroke-width=".6"/><use href="#hstar" x="22" y="0" fill="url(#gStarB)" stroke="#3f86c8" stroke-width=".6"/></svg>
<div class="abs ct gen" style="left:926px;top:176px"> Puzzle, Platform</div>
<div class="abs hl" style="top:219px"></div>
<div class="abs" style="left:0;top:206px;width:1px;height:6px;background:#2b8de0;opacity:.7"></div>
<div class="abs ct num" style="left:322px;top:198px;width:105px;text-align:center">0 d 0 h 0 m</div>
<div class="abs ct num2" style="left:433px;top:198px">4,75 €</div>
<div class="abs ct num2" style="left:540px;top:198px;width:96px;text-align:center;letter-spacing:-.75px;word-spacing:1px">0,00 %</div>
<div class="abs" style="left:638px;top:198px;width:97px;height:21px;background:#ffe8e9"></div>
<div class="abs ct num2" style="left:643px;top:198px">4,75 €</div>
<svg class="abs" style="left:857px;top:203px" width="56" height="12" viewBox="0 0 56 12"><use href="#star" x="0" y="0" fill="url(#gStarG)" stroke="#cfcfcf" stroke-width=".5"/><use href="#star" x="11" y="0" fill="url(#gStarG)" stroke="#cfcfcf" stroke-width=".5"/><use href="#star" x="22" y="0" fill="url(#gStarG)" stroke="#cfcfcf" stroke-width=".5"/><use href="#star" x="33" y="0" fill="url(#gStarG)" stroke="#cfcfcf" stroke-width=".5"/><use href="#star" x="44" y="0" fill="url(#gStarG)" stroke="#cfcfcf" stroke-width=".5"/><use href="#star" x="0" y="0" fill="url(#gStarB)" stroke="#3f86c8" stroke-width=".6"/><use href="#star" x="11" y="0" fill="url(#gStarB)" stroke="#3f86c8" stroke-width=".6"/><use href="#hstar" x="22" y="0" fill="url(#gStarB)" stroke="#3f86c8" stroke-width=".6"/></svg>
<div class="abs hl" style="top:241px"></div>
<div class="abs" style="left:0;top:228px;width:1px;height:6px;background:#2b8de0;opacity:.7"></div>
<div class="abs ct" style="left:183px;top:220px;letter-spacing:-.15px">Playstation Store</div>
<div class="abs ct num" style="left:322px;top:220px;width:105px;text-align:center">0 d 0 h 0 m</div>
<div class="abs ct num2" style="left:433px;top:220px">7,50 €</div>
<div class="abs ct num2" style="left:540px;top:220px;width:96px;text-align:center;letter-spacing:-.75px;word-spacing:1px">0,00 %</div>
<div class="abs" style="left:638px;top:220px;width:97px;height:21px;background:#ffe3e4"></div>
<div class="abs ct num2" style="left:643px;top:220px">7,50 €</div>
<div class="abs ct tag" style="left:737px;top:222px;width:51px;background:#0a6fc8;color:#fff;letter-spacing:-.35px">Soldes</div>
<svg class="abs" style="left:857px;top:225px" width="56" height="12" viewBox="0 0 56 12"><use href="#star" x="0" y="0" fill="url(#gStarG)" stroke="#cfcfcf" stroke-width=".5"/><use href="#star" x="11" y="0" fill="url(#gStarG)" stroke="#cfcfcf" stroke-width=".5"/><use href="#star" x="22" y="0" fill="url(#gStarG)" stroke="#cfcfcf" stroke-width=".5"/><use href="#star" x="33" y="0" fill="url(#gStarG)" stroke="#cfcfcf" stroke-width=".5"/><use href="#star" x="44" y="0" fill="url(#gStarG)" stroke="#cfcfcf" stroke-width=".5"/><use href="#star" x="0" y="0" fill="url(#gStarB)" stroke="#3f86c8" stroke-width=".6"/><use href="#star" x="11" y="0" fill="url(#gStarB)" stroke="#3f86c8" stroke-width=".6"/><use href="#hstar" x="22" y="0" fill="url(#gStarB)" stroke="#3f86c8" stroke-width=".6"/></svg>
<div class="abs ct gen" style="left:926px;top:220px">Action,  Role-Playing,  Strategy</div>
<div class="abs hl" style="top:263px"></div>
<div class="abs ct" style="left:-14.3px;top:242px;letter-spacing:-.3px">Purchased</div>
<svg class="abs" style="left:80px;top:245px;overflow:visible" width="16" height="16" viewBox="0 0 16 16"><path d="M2 1.3 C5 -0.2 9 2.4 14.2 0.5 L13.8 6.8 C9.500 9.2 6.500 7 3.300 9.500Z" fill="#f4f6f8" stroke="rgba(0,0,0,.28)" stroke-width=".7"/><path d="M2.4 1.800 C5 0.6 9 3 13.800 1.3 L13.700 3.2 C9.500 5 6 2.600 2.700 4Z" fill="#ffffff" opacity=".4"/><use href="#flag"/></svg>
<div class="abs ct" style="left:98px;top:242px">Normal</div>
<div class="abs ct num" style="left:322px;top:242px;width:105px;text-align:center">0 d 0 h 0 m</div>
<div class="abs ct num2" style="left:540px;top:242px;width:96px;text-align:center;letter-spacing:-.75px;word-spacing:1px">0,00 %</div>
<div class="abs ct num2" style="left:643px;top:242px">0,00 €</div>
<svg class="abs" style="left:857px;top:247px" width="56" height="12" viewBox="0 0 56 12"><use href="#star" x="0" y="0" fill="url(#gStarG)" stroke="#cfcfcf" stroke-width=".5"/><use href="#star" x="11" y="0" fill="url(#gStarG)" stroke="#cfcfcf" stroke-width=".5"/><use href="#star" x="22" y="0" fill="url(#gStarG)" stroke="#cfcfcf" stroke-width=".5"/><use href="#star" x="33" y="0" fill="url(#gStarG)" stroke="#cfcfcf" stroke-width=".5"/><use href="#star" x="44" y="0" fill="url(#gStarG)" stroke="#cfcfcf" stroke-width=".5"/><use href="#star" x="0" y="0" fill="url(#gStarB)" stroke="#3f86c8" stroke-width=".6"/><use href="#star" x="11" y="0" fill="url(#gStarB)" stroke="#3f86c8" stroke-width=".6"/><use href="#hstar" x="22" y="0" fill="url(#gStarB)" stroke="#3f86c8" stroke-width=".6"/></svg>
<div class="abs ct gen" style="left:926px;top:242px">First-Person Shooter</div>
<div class="abs hl" style="top:285px"></div>
<div class="abs" style="left:0;top:272px;width:1px;height:6px;background:#2b8de0;opacity:.7"></div>
<div class="abs ct" style="left:183px;top:264px;letter-spacing:-.15px">Amazon</div>
<div class="abs" style="left:322px;top:264px;width:105px;height:21px;background:#7896fb"></div>
<div class="abs ct num" style="left:322px;top:264px;width:105px;text-align:center">7 d 18 h 0 m</div>
<div class="abs ct num2" style="left:433px;top:264px">79,89 €</div>
<div class="abs" style="left:544px;top:267px;width:1px;height:15px;background:#8cbd3a"></div><div class="abs" style="left:545px;top:267px;width:2px;height:15px;background:#b9d987"></div>
<div class="abs ct num2" style="left:540px;top:264px;width:96px;text-align:center;letter-spacing:-.75px;word-spacing:1px">232,82 %</div>
<div class="abs ct num2" style="left:643px;top:264px">0,43 €</div>
<svg class="abs" style="left:857px;top:269px" width="56" height="12" viewBox="0 0 56 12"><use href="#star" x="0" y="0" fill="url(#gStarG)" stroke="#cfcfcf" stroke-width=".5"/><use href="#star" x="11" y="0" fill="url(#gStarG)" stroke="#cfcfcf" stroke-width=".5"/><use href="#star" x="22" y="0" fill="url(#gStarG)" stroke="#cfcfcf" stroke-width=".5"/><use href="#star" x="33" y="0" fill="url(#gStarG)" stroke="#cfcfcf" stroke-width=".5"/><use href="#star" x="44" y="0" fill="url(#gStarG)" stroke="#cfcfcf" stroke-width=".5"/><use href="#star" x="0" y="0" fill="url(#gStarB)" stroke="#3f86c8" stroke-width=".6"/><use href="#star" x="11" y="0" fill="url(#gStarB)" stroke="#3f86c8" stroke-width=".6"/><use href="#hstar" x="22" y="0" fill="url(#gStarB)" stroke="#3f86c8" stroke-width=".6"/></svg>
<div class="abs hl" style="top:307px"></div>
<div class="abs" style="left:0;top:294px;width:1px;height:6px;background:#2b8de0;opacity:.7"></div>
<div class="abs ct" style="left:183px;top:286px;letter-spacing:-.15px">Amazon</div>
<div class="abs" style="left:322px;top:286px;width:105px;height:21px;background:#8fa8fc"></div>
<div class="abs ct num" style="left:322px;top:286px;width:105px;text-align:center">6 d 18 h 0 m</div>
<div class="abs ct num2" style="left:433px;top:286px">88,08 €</div>
<div class="abs" style="left:544px;top:289px;width:1px;height:15px;background:#8cbd3a"></div><div class="abs" style="left:545px;top:289px;width:2px;height:15px;background:#b9d987"></div>
<div class="abs ct num2" style="left:540px;top:286px;width:96px;text-align:center;letter-spacing:-.75px;word-spacing:1px">183,92 %</div>
<div class="abs" style="left:638px;top:286px;width:97px;height:21px;background:#fffbfb"></div>
<div class="abs ct num2" style="left:643px;top:286px">0,54 €</div>
<div class="abs ct tag" style="left:737px;top:288px;width:45px;background:#fe4a4e;color:#fff;letter-spacing:.45px">Multi</div>
<svg class="abs" style="left:857px;top:291px" width="56" height="12" viewBox="0 0 56 12"><use href="#star" x="0" y="0" fill="url(#gStarG)" stroke="#cfcfcf" stroke-width=".5"/><use href="#star" x="11" y="0" fill="url(#gStarG)" stroke="#cfcfcf" stroke-width=".5"/><use href="#star" x="22" y="0" fill="url(#gStarG)" stroke="#cfcfcf" stroke-width=".5"/><use href="#star" x="33" y="0" fill="url(#gStarG)" stroke="#cfcfcf" stroke-width=".5"/><use href="#star" x="44" y="0" fill="url(#gStarG)" stroke="#cfcfcf" stroke-width=".5"/><use href="#star" x="0" y="0" fill="url(#gStarB)" stroke="#3f86c8" stroke-width=".6"/><use href="#star" x="11" y="0" fill="url(#gStarB)" stroke="#3f86c8" stroke-width=".6"/><use href="#star" x="22" y="0" fill="url(#gStarB)" stroke="#3f86c8" stroke-width=".6"/><use href="#star" x="33" y="0" fill="url(#gStarB)" stroke="#3f86c8" stroke-width=".6"/><use href="#star" x="44" y="0" fill="url(#gStarB)" stroke="#3f86c8" stroke-width=".6"/></svg>
<div class="abs hl" style="top:329px"></div>
<div class="abs ct" style="left:-14.3px;top:308px;letter-spacing:-.3px">Purchased</div>
<svg class="abs" style="left:80px;top:311px;overflow:visible" width="16" height="16" viewBox="0 0 16 16"><path d="M2 1.3 C5 -0.2 9 2.4 14.2 0.5 L13.8 6.8 C9.500 9.2 6.500 7 3.300 9.500Z" fill="#2d8ee0" stroke="rgba(0,0,0,.28)" stroke-width=".7"/><path d="M2.4 1.800 C5 0.6 9 3 13.800 1.3 L13.700 3.2 C9.500 5 6 2.600 2.700 4Z" fill="#ffffff" opacity=".4"/><use href="#flag"/></svg>
<div class="abs ct" style="left:98px;top:308px">Lowest</div>
<div class="abs ct num" style="left:322px;top:308px;width:105px;text-align:center">0 d 0 h 0 m</div>
<div class="abs ct num2" style="left:540px;top:308px;width:96px;text-align:center;letter-spacing:-.75px;word-spacing:1px">0,00 %</div>
<div class="abs ct num2" style="left:643px;top:308px">0,00 €</div>
<svg class="abs" style="left:857px;top:313px" width="56" height="12" viewBox="0 0 56 12"><use href="#star" x="0" y="0" fill="url(#gStarG)" stroke="#cfcfcf" stroke-width=".5"/><use href="#star" x="11" y="0" fill="url(#gStarG)" stroke="#cfcfcf" stroke-width=".5"/><use href="#star" x="22" y="0" fill="url(#gStarG)" stroke="#cfcfcf" stroke-width=".5"/><use href="#star" x="33" y="0" fill="url(#gStarG)" stroke="#cfcfcf" stroke-width=".5"/><use href="#star" x="44" y="0" fill="url(#gStarG)" stroke="#cfcfcf" stroke-width=".5"/><use href="#star" x="0" y="0" fill="url(#gStarB)" stroke="#3f86c8" stroke-width=".6"/><use href="#star" x="11" y="0" fill="url(#gStarB)" stroke="#3f86c8" stroke-width=".6"/><use href="#hstar" x="22" y="0" fill="url(#gStarB)" stroke="#3f86c8" stroke-width=".6"/></svg>
<div class="abs vl" style="left:76px"></div>
<div class="abs vl" style="left:177px"></div>
<div class="abs vl" style="left:321px"></div>
<div class="abs vl" style="left:427px"></div>
<div class="abs vl" style="left:540px"></div>
<div class="abs vl" style="left:637px"></div>
<div class="abs vl" style="left:735px"></div>
<div class="abs vl" style="left:850px"></div>
<div class="abs vl" style="left:920px"></div>
</div>

<!-- vertical scrollbar -->
<div class="abs" style="left:1097px;top:258px;width:17px;height:352px;background:#f0f0f0"></div>
<div class="abs" style="left:1098px;top:288px;width:15px;height:33px;background:#c8c8c8"></div>
<svg class="abs" style="left:1101px;top:264px" width="9" height="7" viewBox="0 0 9 7"><path d="M1 5.600l3.500-3.700L8 5.600" fill="none" stroke="#484848" stroke-width="2.500"/></svg>
<svg class="abs" style="left:1101px;top:597px" width="9" height="7" viewBox="0 0 9 7"><path d="M1 1.400l3.500 3.700L8 1.400" fill="none" stroke="#484848" stroke-width="2.500"/></svg>
<!-- horizontal scrollbar -->
<div class="abs" style="left:38px;top:610px;width:1076px;height:16px;background:#f0f0f0"></div>
<div class="abs" style="left:414px;top:610px;width:412px;height:16px;background:#c8c8c8"></div>
<svg class="abs" style="left:43px;top:613.500px" width="7" height="9" viewBox="0 0 7 9"><path d="M5.500 1L1.800 4.500 5.500 8" fill="none" stroke="#484848" stroke-width="2.500"/></svg>
<svg class="abs" style="left:1085px;top:613.500px" width="7" height="9" viewBox="0 0 7 9"><path d="M1.500 1L5.200 4.500 1.500 8" fill="none" stroke="#484848" stroke-width="2.500"/></svg>


<div class="abs" style="left:8px;top:631px;width:1111px;height:23px;background:linear-gradient(#4f4f4f 0%,#3d3d3d 50%,#2f2f2f 100%);border-top:1px solid #2c2c2c;border-bottom:1px solid #262626"></div>
<div class="abs st" style="left:12px;letter-spacing:-.15px">Total : 155 games, 8 platforms</div>
<div class="abs" style="left:174px;top:633px;width:2px;height:20px;background:linear-gradient(90deg,#262626 0 1px,#5a5a5a 1px 2px)"></div>
<div class="abs st" style="left:182px;letter-spacing:-.15px">Displayed : 144 games (collection and wishlist, planned and released)</div>
<svg class="abs" style="left:911px;top:636px" width="16" height="14" viewBox="0 0 16 14">
 <path d="M8.500 1.200l2-.9 1 1.600 1.800-.5.400 2 1.900.3-.7 1.800 1.100 1.400-1.600.9-.1 1.900-1.900-.2-2.600-2.400z" fill="#4cb82e" stroke="#2f8a18" stroke-width=".5"/>
 <path d="M4.300 3.600l2.200-.5.900 1.700 2.100.1.100 2 1.700 1-1.100 1.600.6 1.900-2 .4-.8 1.600-1.800-1-1.900.5-.5-2z" fill="#2f8be0" stroke="#1b62ad" stroke-width=".5"/>
 <path d="M.5 8.200l1.800-.9 1.200 1.300 1.800-.3.400 1.800 1.500.8-.9 1.500-1.800.2-.6 1.100-1.600-.6-1.500.3-.3-1.800-1.100-1.100z" fill="#efd02a" stroke="#b3960f" stroke-width=".5"/>
</svg>
<div class="abs st" style="left:930px;letter-spacing:-.1px">DLC data aggregated</div>
<div class="abs" style="left:1047px;top:633px;width:2px;height:20px;background:linear-gradient(90deg,#262626 0 1px,#5a5a5a 1px 2px)"></div>
<div class="abs st" style="left:1054px">Filters</div>
<svg class="abs" style="left:1091px;top:635px" width="12" height="16" viewBox="0 0 12 16">
 <path d="M3.500 1h7.500l-2.500 13H1z" fill="#dfe4ea" stroke="#8c949c" stroke-width=".7"/><path d="M4.200 1.800h6l-1 5.400h-6z" fill="#e8352c"/>
</svg>
<svg class="abs" style="left:1106px;top:641px" width="12" height="12" viewBox="0 0 12 12"><g fill="#5e5e5e"><rect x="9" y="1" width="2" height="2"/><rect x="5" y="5" width="2" height="2"/><rect x="9" y="5" width="2" height="2"/><rect x="1" y="9" width="2" height="2"/><rect x="5" y="9" width="2" height="2"/><rect x="9" y="9" width="2" height="2"/></g><g fill="#1b1b1b"><rect x="8" y="0" width="2" height="2"/><rect x="4" y="4" width="2" height="2"/><rect x="8" y="4" width="2" height="2"/><rect x="0" y="8" width="2" height="2"/><rect x="4" y="8" width="2" height="2"/><rect x="8" y="8" width="2" height="2"/></g></svg>

</div>
</body></html>
